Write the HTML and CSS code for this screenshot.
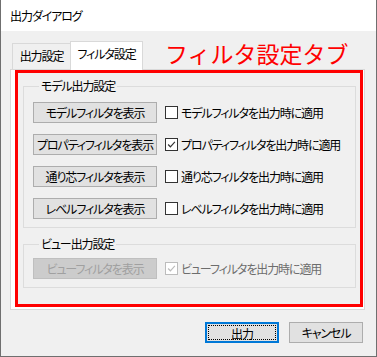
FILE: index.html
```html
<!DOCTYPE html>
<html lang="ja">
<head>
  <meta charset="UTF-8">
  <title>出力ダイアログ</title>
  <link rel="stylesheet" href="styles.css">
</head>
<body>
  <div class="window">
    <div class="titlebar">出力ダイアログ</div>

    <div class="client">
      <div class="tabstrip">
        <div class="tab">出力設定</div>
        <div class="tab active">フィルタ設定</div>
        <div class="note">フィルタ設定タブ</div>
      </div>

      <div class="tabpage">
        <div class="highlight">
          <fieldset class="group">
            <legend>モデル出力設定</legend>
            <div class="row">
              <button class="btn">モデルフィルタを表示</button>
              <label class="check"><span class="box"></span>モデルフィルタを出力時に適用</label>
            </div>
            <div class="row">
              <button class="btn">プロパティフィルタを表示</button>
              <label class="check checked"><span class="box"><svg viewBox="0 0 13 13"><polyline points="2.5,6.5 5.2,9.2 10.5,3.5"/></svg></span>プロパティフィルタを出力時に適用</label>
            </div>
            <div class="row">
              <button class="btn">通り芯フィルタを表示</button>
              <label class="check"><span class="box"></span>通り芯フィルタを出力時に適用</label>
            </div>
            <div class="row">
              <button class="btn">レベルフィルタを表示</button>
              <label class="check"><span class="box"></span>レベルフィルタを出力時に適用</label>
            </div>
          </fieldset>

          <fieldset class="group second">
            <legend>ビュー出力設定</legend>
            <div class="row">
              <button class="btn" disabled>ビューフィルタを表示</button>
              <label class="check checked disabled"><span class="box"><svg viewBox="0 0 13 13"><polyline points="2.5,6.5 5.2,9.2 10.5,3.5"/></svg></span>ビューフィルタを出力時に適用</label>
            </div>
          </fieldset>
        </div>
      </div>

      <div class="actions">
        <button class="btn default">出力</button>
        <button class="btn">キャンセル</button>
      </div>
    </div>
  </div>
</body>
</html>
```

FILE: styles.css
```css
* {
  box-sizing: border-box;
}

html, body {
  margin: 0;
  padding: 0;
  background-color: #f0f0f0;
}

body {
  font-family: "Noto Sans CJK JP", sans-serif;
  font-size: 12px;
  font-feature-settings: "palt";
  letter-spacing: -1.1px;
  color: #000;
}

.window {
  width: 377px;
  height: 357px;
  background-color: #f0f0f0;
  border: 1px solid #6f6f6f;
  border-top: none;
}

.titlebar {
  height: 31px;
  background-color: #fff;
  padding-left: 9px;
  line-height: 31px;
}

.client {
  padding: 0 11px 0 9px;
}

/* tabs */
.tabstrip {
  display: flex;
  align-items: flex-end;
  height: 28px;
  margin-top: 10px;
  padding-left: 2px;
}

.tab {
  width: 58px;
  height: 26px;
  line-height: 24px;
  text-align: center;
  border: 1px solid #d9d9d9;
  border-bottom: none;
  border-right: none;
  background-color: #f0f0f0;
}

.tab.active {
  width: 73px;
  height: 29px;
  margin-bottom: -1px;
  border-right: 1px solid #d9d9d9;
  background-color: #fff;
  position: relative;
  z-index: 1;
}

.note {
  align-self: flex-start;
  margin-left: 22px;
  margin-top: -1px;
  font-size: 23px;
  line-height: 26px;
  letter-spacing: 0;
  font-feature-settings: normal;
  color: #ff0000;
}

.tabpage {
  height: 241px;
  border: 1px solid #d9d9d9;
  background-color: #fff;
  padding: 0 1px 2px 4px;
}

.highlight {
  height: 237px;
  border: 3px solid #ff0000;
  background-color: #f0f0f0;
  padding: 6px 4px 0 5px;
}

/* group boxes */
.group {
  margin: 0;
  padding: 9px 8px 8px 9px;
  border: 1px solid #dcdcdc;
  display: flex;
  flex-direction: column;
  gap: 11px;
}

.group legend {
  margin-left: 6px;
  padding: 0 2px;
  line-height: 14px;
}

.group.second {
  margin-top: 9px;
  padding-top: 7px;
}

.row {
  display: flex;
  align-items: center;
  gap: 8px;
}

.btn {
  font: inherit;
  font-feature-settings: "palt";
  letter-spacing: -1.1px;
  color: #000;
  height: 21px;
  padding: 0;
  line-height: 19px;
  background-color: #e1e1e1;
  border: 1px solid #adadad;
  border-radius: 0;
}

.row .btn {
  width: 124px;
}

.btn:disabled {
  background-color: #cccccc;
  border-color: #bfbfbf;
  color: #a0a0a0;
}

.check {
  display: flex;
  align-items: center;
  gap: 3px;
}

.box {
  width: 13px;
  height: 13px;
  border: 1px solid #333;
  background-color: #fff;
  display: flex;
}

.box svg {
  width: 11px;
  height: 11px;
  fill: none;
  stroke: #333;
  stroke-width: 1.4;
}

.check.disabled {
  color: #6d6d6d;
}

.check.disabled .box {
  border-color: #bcbcbc;
}

.check.disabled .box svg {
  stroke: #bcbcbc;
}

/* dialog buttons */
.actions {
  display: flex;
  justify-content: flex-end;
  gap: 10px;
  margin-top: 12px;
  padding-right: 2px;
}

.actions .btn {
  width: 74px;
}

.btn.default {
  border: 2px solid #0078d7;
  outline: 1px dotted #000;
  outline-offset: -4px;
}
```
